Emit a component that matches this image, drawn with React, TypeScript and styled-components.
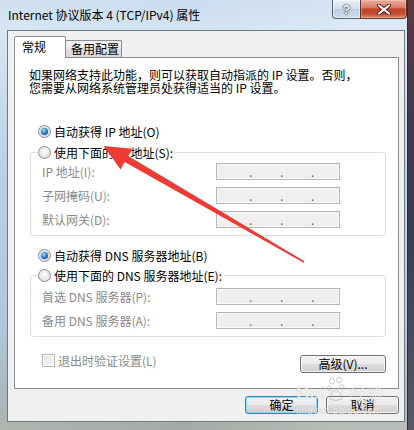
import React from 'react';
import styled, { createGlobalStyle } from 'styled-components';

const GlobalStyle = createGlobalStyle`
  html, body {
    margin: 0;
    padding: 0;
    background: #454050;
  }
  body {
    font-family: "Noto Sans CJK SC", "Noto Sans", sans-serif;
    font-size: 12px;
    color: #000;
  }
  * {
    box-sizing: border-box;
  }
`;

// ----------------------------------------------------------------------------

const Desktop = styled.div`
    position: relative;
    width: 414px;
    height: 430px;
    overflow: hidden;
    display: flex;
    background: linear-gradient(180deg, #5c3a42 0%, #433a4c 25%, #3d3b4d 55%, #5b5868 100%);
`;

const Window = styled.div`
    width: 408px;
    height: 430px;
    flex-shrink: 0;
    display: flex;
    flex-direction: column;
    padding: 0 2px 8px 7px;
    border-right: 1px solid #2b2f3a;
    background:
        linear-gradient(90deg, rgba(255, 255, 255, 0.12) 0%, rgba(255, 255, 255, 0) 45%, rgba(255, 255, 255, 0.22) 85%),
        linear-gradient(180deg, #cadcef 0px, #d3e3f3 30px, #b4cbe3 160px, #a7bed6 330px, #9eadb3 400px, #a5aba4 430px);
`;

const TitleBar = styled.div`
    height: 30px;
    display: flex;
    align-items: flex-start;
    margin-right: -2px;
`;

const Title = styled.div`
    padding: 8px 0 0 1px;
    line-height: 14px;
    font-size: 12px;
    color: #000;
    white-space: nowrap;
`;

const CaptionButtons = styled.div`
    margin-left: auto;
    display: flex;
    height: 19px;
`;

const HelpButton = styled.div`
    width: 28px;
    height: 19px;
    border: 1px solid rgba(45, 55, 75, 0.75);
    border-top: 0;
    border-right: 0;
    border-radius: 0 0 0 4px;
    background: linear-gradient(180deg, #e9f0f8 0%, #d2dfed 48%, #bccde0 52%, #cddcec 100%);
    box-shadow: inset 0 0 0 1px rgba(255, 255, 255, 0.5);
    display: flex;
    align-items: center;
    justify-content: center;
    font-family: "Liberation Sans", sans-serif;
    font-weight: bold;
    font-size: 13px;
    color: #fff;
    text-shadow: 0 0 1px #33404f, 0 0 1px #33404f, 0 0 2px #33404f;
`;

const CloseButton = styled.div`
    width: 47px;
    height: 19px;
    border: 1px solid rgba(60, 30, 30, 0.8);
    border-top: 0;
    border-radius: 0 0 4px 0;
    background: linear-gradient(180deg, #eab0a2 0%, #d77a64 42%, #c3442c 50%, #c2482f 75%, #dd8a6a 100%);
    box-shadow: inset 0 0 0 1px rgba(255, 220, 200, 0.35);
    display: flex;
    align-items: center;
    justify-content: center;
`;

// ----------------------------------------------------------------------------

const Client = styled.div`
    flex: 1;
    display: flex;
    flex-direction: column;
    background: #f0f0f0;
    border: 1px solid #6f7785;
    padding: 5px 5px 7px 6px;
`;

const TabStrip = styled.div`
    display: flex;
    align-items: flex-end;
    height: 22px;
    margin-bottom: -1px;
    position: relative;
    z-index: 1;
`;

const Tab = styled.div<{ $active?: boolean }>`
    position: relative;
    z-index: ${({ $active }) => ($active ? 2 : 1)};
    height: ${({ $active }) => ($active ? '22px' : '17px')};
    width: ${({ $active }) => ($active ? '52px' : '57px')};
    margin-left: ${({ $active }) => ($active ? '0' : '-1px')};
    margin-bottom: ${({ $active }) => ($active ? '0' : '1px')};
    padding: ${({ $active }) => ($active ? '3px 0 0 7px' : '1px 0 0 5px')};
    border: 1px solid #898c95;
    border-bottom: 0;
    border-radius: 2px 2px 0 0;
    background: ${({ $active }) =>
        $active ? '#fff' : 'linear-gradient(180deg, #f3f3f3 0%, #ebebeb 50%, #dedede 52%, #d8d8d8 100%)'};
    line-height: 14px;
    white-space: nowrap;
`;

const Panel = styled.div`
    background: #fff;
    border: 1px solid #898c95;
    padding: 10px 12px 15px 15px;
    display: flex;
    flex-direction: column;
`;

const Description = styled.p`
    margin: 0 0 0 -1px;
    line-height: 13px;
    white-space: nowrap;
`;

const RadioRow = styled.label<{ $mt?: number }>`
    display: flex;
    align-items: center;
    gap: 3px;
    height: 13px;
    line-height: 13px;
    margin-top: ${({ $mt }) => $mt ?? 0}px;
    padding-left: 8px;
    white-space: nowrap;
`;

const LegendRow = styled(RadioRow)`
    padding-left: 0;
`;

const RadioCircle = styled.span<{ $checked?: boolean }>`
    width: 13px;
    height: 13px;
    flex-shrink: 0;
    border-radius: 50%;
    border: 1px solid #8b8e93;
    background: radial-gradient(circle at 50% 40%, #ffffff 0%, #ececec 45%, #cfcfcf 100%);
    display: flex;
    align-items: center;
    justify-content: center;

    &::after {
        content: '';
        display: ${({ $checked }) => ($checked ? 'block' : 'none')};
        width: 7px;
        height: 7px;
        border-radius: 50%;
        background: radial-gradient(circle at 40% 35%, #b9e2ff 0%, #3d8ad6 40%, #13509a 75%, #0b3a74 100%);
        box-shadow: 0 0 0 1px #c7dbef;
    }
`;

const Group = styled.fieldset<{ $mt: number }>`
    margin: ${({ $mt }) => $mt}px 0 0 0;
    padding: 0;
    border: 1px solid #d5dfe5;
    border-radius: 3px;
    min-width: 0;
`;

const GroupLegend = styled.legend`
    margin-left: 7px;
    padding: 0 2px 0 0;
    background: #fff;
`;

const FieldGrid = styled.div<{ $pt: number }>`
    display: grid;
    grid-template-columns: 174px 124px;
    grid-auto-rows: 17px;
    row-gap: 7px;
    padding: ${({ $pt }) => $pt}px 0 7px 11px;
`;

const FieldLabel = styled.span`
    display: flex;
    align-items: center;
    color: #8a8a8a;
    white-space: nowrap;
`;

const IpBox = styled.div`
    height: 17px;
    display: flex;
    align-items: flex-end;
    gap: 28px;
    padding-left: 32px;
    border: 1px solid #b6b6b6;
    background: #efefef;
    box-shadow: inset 0 0 0 1px #f8f8f8;
`;

const IpDot = styled.span`
    width: 3px;
    line-height: 15px;
    color: #6a6a6a;
    font-size: 12px;
`;

const BottomRow = styled.div`
    display: flex;
    justify-content: space-between;
    align-items: flex-start;
    margin-top: 17px;
    padding-left: 12px;
`;

const CheckRow = styled.label`
    display: flex;
    align-items: center;
    gap: 3px;
    height: 13px;
    line-height: 13px;
    color: #8a8a8a;
    white-space: nowrap;
`;

const CheckBox = styled.span`
    width: 13px;
    height: 13px;
    border: 1px solid #b4b4b4;
    background: linear-gradient(135deg, #e4e4e4 0%, #f6f6f6 100%);
    box-shadow: inset 0 0 0 1px #fdfdfd;
`;

const Button = styled.button<{ $width: number; $default?: boolean }>`
    width: ${({ $width }) => $width}px;
    height: 18px;
    padding: 0;
    font-family: inherit;
    font-size: 12px;
    line-height: 14px;
    color: #000;
    border: 1px solid ${({ $default }) => ($default ? '#3c7fb1' : '#707070')};
    border-radius: 3px;
    background: linear-gradient(180deg, #f2f2f2 0%, #ebebeb 48%, #dddddd 52%, #cfcfcf 100%);
    box-shadow: inset 0 0 0 1px ${({ $default }) => ($default ? '#8fd8f5' : 'rgba(255, 255, 255, 0.75)')};
    white-space: nowrap;
`;

const AdvancedButton = styled(Button)`
    margin-top: 1px;
`;

const Footer = styled.div`
    display: flex;
    justify-content: flex-end;
    gap: 8px;
    margin-top: 7px;
`;

// ----------------------------------------------------------------------------

const Arrow = styled.svg`
    position: absolute;
    left: 0;
    top: 0;
    pointer-events: none;
`;

const Watermark = styled.div`
    position: absolute;
    left: 296px;
    top: 372px;
    pointer-events: none;
    color: rgba(255, 255, 255, 0.7);
    text-shadow: 0 0 1px rgba(120, 120, 120, 0.35);
    display: flex;
    flex-direction: column;
`;

const WatermarkLogo = styled.div`
    display: flex;
    align-items: flex-end;
    gap: 1px;
    height: 31px;
`;

const WatermarkBig = styled.span`
    font-family: "Liberation Sans", sans-serif;
    font-weight: bold;
    font-size: 19px;
    line-height: 19px;
    margin-bottom: 1px;
`;

const WatermarkCjk = styled.span`
    font-size: 17px;
    line-height: 19px;
    margin-left: 4px;
    margin-bottom: 1px;
`;

const WatermarkUrl = styled.span`
    font-family: "Liberation Sans", sans-serif;
    font-size: 10px;
    line-height: 12px;
    letter-spacing: 0.3px;
    margin-top: 2px;
`;

const FieldRows: React.FC<{ labels: string[] }> = ({ labels }) => (
    <>
        {labels.map((label) => (
            <React.Fragment key={label}>
                <FieldLabel>{label}</FieldLabel>
                <IpBox>
                    <IpDot>.</IpDot>
                    <IpDot>.</IpDot>
                    <IpDot>.</IpDot>
                </IpBox>
            </React.Fragment>
        ))}
    </>
);

export default function App() {
    return (
        <>
            <GlobalStyle />
            <Desktop>
                <Window>
                    <TitleBar>
                        <Title>Internet 协议版本 4 (TCP/IPv4) 属性</Title>
                        <CaptionButtons>
                            <HelpButton>?</HelpButton>
                            <CloseButton>
                                <svg width="14" height="11" viewBox="0 0 14 11">
                                    <path d="M2 1.5 L12 9.5 M12 1.5 L2 9.5" stroke="#4a2020" strokeWidth="4" strokeLinecap="round" />
                                    <path d="M2 1.5 L12 9.5 M12 1.5 L2 9.5" stroke="#ffffff" strokeWidth="2.2" strokeLinecap="round" />
                                </svg>
                            </CloseButton>
                        </CaptionButtons>
                    </TitleBar>
                    <Client>
                        <TabStrip>
                            <Tab $active>常规</Tab>
                            <Tab>备用配置</Tab>
                        </TabStrip>
                        <Panel>
                            <Description>
                                如果网络支持此功能，则可以获取自动指派的 IP 设置。否则，
                                <br />
                                您需要从网络系统管理员处获得适当的 IP 设置。
                            </Description>

                            <RadioRow $mt={31}>
                                <RadioCircle $checked />
                                自动获得 IP 地址(O)
                            </RadioRow>
                            <Group $mt={8}>
                                <GroupLegend>
                                    <LegendRow>
                                        <RadioCircle />
                                        使用下面的 IP 地址(S):
                                    </LegendRow>
                                </GroupLegend>
                                <FieldGrid $pt={4}>
                                    <FieldRows labels={['IP 地址(I):', '子网掩码(U):', '默认网关(D):']} />
                                </FieldGrid>
                            </Group>

                            <RadioRow $mt={13}>
                                <RadioCircle $checked />
                                自动获得 DNS 服务器地址(B)
                            </RadioRow>
                            <Group $mt={7}>
                                <GroupLegend>
                                    <LegendRow>
                                        <RadioCircle />
                                        使用下面的 DNS 服务器地址(E):
                                    </LegendRow>
                                </GroupLegend>
                                <FieldGrid $pt={6}>
                                    <FieldRows labels={['首选 DNS 服务器(P):', '备用 DNS 服务器(A):']} />
                                </FieldGrid>
                            </Group>

                            <BottomRow>
                                <CheckRow>
                                    <CheckBox />
                                    退出时验证设置(L)
                                </CheckRow>
                                <AdvancedButton $width={86}>高级(V)...</AdvancedButton>
                            </BottomRow>
                        </Panel>
                        <Footer>
                            <Button $width={73} $default>
                                确定
                            </Button>
                            <Button $width={73}>取消</Button>
                        </Footer>
                    </Client>
                </Window>

                <Arrow width="414" height="430" viewBox="0 0 414 430">
                    <polygon
                        points="104,146 132.5,148.7 128.3,156.1 304.4,261.3 303.6,262.7 124.7,162.1 120.5,169.5"
                        fill="#ef3a36"
                    />
                </Arrow>

                <Watermark>
                    <WatermarkLogo>
                        <WatermarkBig>Bai</WatermarkBig>
                        <svg width="18" height="28" viewBox="0 0 18 28">
                            <g fill="none" stroke="rgba(150,150,150,0.45)" strokeWidth="1">
                                <ellipse cx="5" cy="6" rx="2.5" ry="3" />
                                <ellipse cx="12" cy="5" rx="2.5" ry="3" />
                                <ellipse cx="2.5" cy="13" rx="2" ry="2.5" />
                                <ellipse cx="15" cy="12" rx="2" ry="2.5" />
                                <path d="M3 24 Q4 16 9 15 Q14 16 15 24 Q9 27 3 24 Z" />
                            </g>
                        </svg>
                        <WatermarkCjk>经验</WatermarkCjk>
                    </WatermarkLogo>
                    <WatermarkUrl>jingyan.baidu.com</WatermarkUrl>
                </Watermark>
            </Desktop>
        </>
    );
}
